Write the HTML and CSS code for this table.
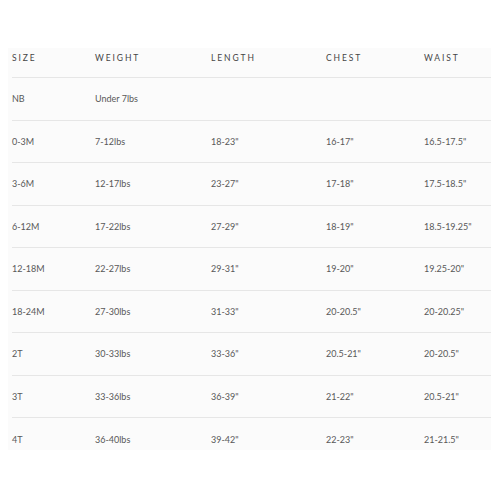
FILE: index.html
```html
<!DOCTYPE html>
<html>
<head>
<meta charset="utf-8">
<link rel="stylesheet" href="styles.css">
</head>
<body>
<div class="panel">
  <div class="row head">
    <div>Size</div><div>Weight</div><div>Length</div><div>Chest</div><div>Waist</div>
  </div>
  <div class="row"><div>NB</div><div>Under 7lbs</div><div></div><div></div><div></div></div>
  <div class="row"><div>0-3M</div><div>7-12lbs</div><div>18-23"</div><div>16-17"</div><div>16.5-17.5"</div></div>
  <div class="row"><div>3-6M</div><div>12-17lbs</div><div>23-27"</div><div>17-18"</div><div>17.5-18.5"</div></div>
  <div class="row"><div>6-12M</div><div>17-22lbs</div><div>27-29"</div><div>18-19"</div><div>18.5-19.25"</div></div>
  <div class="row"><div>12-18M</div><div>22-27lbs</div><div>29-31"</div><div>19-20"</div><div>19.25-20"</div></div>
  <div class="row"><div>18-24M</div><div>27-30lbs</div><div>31-33"</div><div>20-20.5"</div><div>20-20.25"</div></div>
  <div class="row"><div>2T</div><div>30-33lbs</div><div>33-36"</div><div>20.5-21"</div><div>20-20.5"</div></div>
  <div class="row"><div>3T</div><div>33-36lbs</div><div>36-39"</div><div>21-22"</div><div>20.5-21"</div></div>
  <div class="row last"><div>4T</div><div>36-40lbs</div><div>39-42"</div><div>22-23"</div><div>21-21.5"</div></div>
</div>
</body>
</html>
```
FILE: styles.css
```css
html, body {
  margin: 0;
  padding: 0;
  background: #ffffff;
}
body {
  font-family: Lato, "Open Sans", sans-serif;
  color: #585858;
}
.panel {
  margin: 48px 0 0 8px;
  width: 483px;
  height: 402px;
  overflow: hidden;
  background: #fbfbfb;
  padding-left: 4px;
  box-sizing: border-box;
}
.row {
  display: grid;
  grid-template-columns: 83px 116px 115px 98px 1fr;
  align-items: center;
  height: 42.5px;
  box-sizing: border-box;
  border-bottom: 1px solid #e6e6e6;
  font-size: 9px;
}
.row.head {
  height: 30px;
  padding-bottom: 10px;
  padding-top: 1px;
  text-transform: uppercase;
  letter-spacing: 1.9px;
  font-size: 8.5px;
  color: #454545;
}
.row.last {
  border-bottom: none;
}
```
